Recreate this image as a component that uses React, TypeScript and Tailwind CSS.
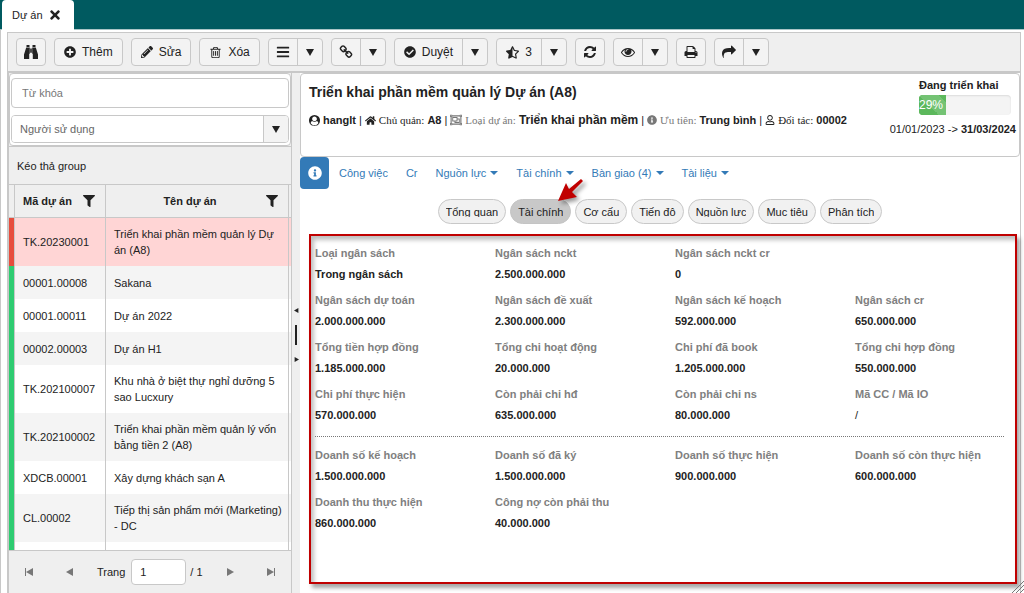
import type { ReactNode } from "react";
import {
  FaBars,
  FaCheckCircle,
  FaFilter,
  FaHome,
  FaInfoCircle,
  FaPencilAlt,
  FaPlusCircle,
  FaRegObjectGroup,
  FaRegUser,
  FaStarHalfAlt,
  FaTimes,
} from "react-icons/fa";

const paths = {
  refresh:
    "M1639 1056q0 5-1 7-64 268-268 434.5t-478 166.5q-146 0-282.5-55t-243.5-157l-129 129q-19 19-45 19t-45-19-19-45v-448q0-26 19-45t45-19h448q26 0 45 19t19 45-19 45l-137 137q71 66 161 102t187 36q134 0 250-65t186-179q11-17 53-117 8-23 30-23h192q13 0 22.5 9.5t9.5 22.5zm25-800v448q0 26-19 45t-45 19h-448q-26 0-45-19t-19-45 19-45l138-138q-148-137-349-137-134 0-250 65t-186 179q-11 17-53 117-8 23-30 23h-199q-13 0-22.5-9.5t-9.5-22.5v-7q65-268 270-434.5t480-166.5q146 0 284 55.5t245 156.5l130-129q19-19 45-19t45 19 19 45z",
  print:
    "M448 1536h896v-256h-896v256zm0-640h896v-384h-160q-40 0-68-28t-28-68v-160h-640v640zm1152 64q0-26-19-45t-45-19-45 19-19 45 19 45 45 19 45-19 19-45zm128 0v416q0 13-9.5 22.5t-22.5 9.5h-224v160q0 40-28 68t-68 28h-960q-40 0-68-28t-28-68v-160h-224q-13 0-22.5-9.5t-9.5-22.5v-416q0-79 56.5-135.5t135.5-56.5h64v-544q0-40 28-68t68-28h672q40 0 88 20t76 48l152 152q28 28 48 76t20 88v256h64q79 0 135.5 56.5t56.5 135.5z",
  share:
    "M1792 640q0 26-19 45l-512 512q-19 19-45 19t-45-19-19-45v-256h-224q-98 0-175.5 6t-154 21.5-133 42.5-105.5 69.5-80 101-48.5 138.5-17.5 181q0 55 5 123 0 6 2.5 23.5t2.5 26.5q0 15-8.5 25t-23.5 10q-16 0-28-17-7-9-13-22t-13.5-30-10.5-24q-127-285-127-451 0-199 53-333 162-403 875-403h224v-256q0-26 19-45t45-19 45 19l512 512q19 19 19 45z",
  link: "M1520 1216q0-40-28-68l-208-208q-28-28-68-28-42 0-72 32 3 3 19 18.5t21.5 21.5 15 19 13 25.5 3.5 27.5q0 40-28 68t-68 28q-15 0-27.5-3.5t-25.5-13-19-15-21.5-21.5-18.5-19q-33 31-33 73 0 40 28 68l206 207q27 27 68 27 40 0 68-26l147-146q28-28 28-67zm-703-705q0-40-28-68l-206-207q-28-28-68-28-39 0-68 27l-147 146q-28 28-28 67 0 40 28 68l208 208q27 27 68 27 42 0 72-31-3-3-19-18.5t-21.5-21.5-15-19-13-25.5-3.5-27.5q0-40 28-68t68-28q15 0 27.5 3.5t25.5 13 19 15 21.5 21.5 18.5 19q33-31 33-73zm895 705q0 120-85 203l-147 146q-83 83-203 83-121 0-204-85l-206-207q-83-83-83-203 0-123 88-209l-88-88q-86 88-208 88-120 0-204-84l-208-208q-84-84-84-204t85-203l147-146q83-83 203-83 121 0 204 85l206 207q83 83 83 203 0 123-88 209l88 88q86-88 208-88 120 0 204 84l208 208q84 84 84 204z",
  trash:
    "M704 736v576q0 14-9 23t-23 9h-64q-14 0-23-9t-9-23v-576q0-14 9-23t23-9h64q14 0 23 9t9 23zm256 0v576q0 14-9 23t-23 9h-64q-14 0-23-9t-9-23v-576q0-14 9-23t23-9h64q14 0 23 9t9 23zm256 0v576q0 14-9 23t-23 9h-64q-14 0-23-9t-9-23v-576q0-14 9-23t23-9h64q14 0 23 9t9 23zm128 724v-948h-896v948q0 22 7 40.5t14.5 27 10.5 8.5h832q3 0 10.5-8.5t14.5-27 7-40.5zm-672-1076h448l-48-117q-7-9-17-11h-317q-10 2-17 11zm928 32v64q0 14-9 23t-23 9h-96v948q0 83-47 143.5t-113 60.5h-832q-66 0-113-58.5t-47-141.5v-952h-96q-14 0-23-9t-9-23v-64q0-14 9-23t23-9h309l70-167q15-37 54-63t79-26h320q40 0 79 26t54 63l70 167h309q14 0 23 9t9 23z",
  eye: "M1664 960q-152-236-381-353 61 104 61 225 0 185-131.5 316.5t-316.5 131.5-316.5-131.5-131.5-316.5q0-121 61-225-229 117-381 353 133 205 333.5 326.5t434.5 121.5 434.5-121.5 333.5-326.5zm-720-384q0-20-14-34t-34-14q-125 0-214.5 89.5t-89.5 214.5q0 20 14 34t34 14 34-14 14-34q0-86 61-147t147-61q20 0 34-14t14-34zm848 384q0 34-20 69-140 230-376.5 368.5t-499.5 138.5-499.5-139-376.5-368q-20-35-20-69t20-69q140-229 376.5-368t499.5-139 499.5 139 376.5 368q20 35 20 69z",
  user: "M1523 1339q-22-155-87.5-257.5t-184.5-118.5q-67 74-159.5 115.5t-195.5 41.5-195.5-41.5-159.5-115.5q-119 16-184.5 118.5t-87.5 257.5q106 150 271 237.5t356 87.5 356-87.5 271-237.5zm-243-699q0-159-112.5-271.5t-271.5-112.5-271.5 112.5-112.5 271.5 112.5 271.5 271.5 112.5 271.5-112.5 112.5-271.5zm512 256q0 182-71 347.5t-190.5 286-285.5 191.5-349 71q-182 0-348-71t-286-191-191-286-71-348 71-348 191-286 286-191 348-71 348 71 286 191 191 286 71 348z",
};

function Icon({ name, className = "size-3.5" }: { name: keyof typeof paths; className?: string }) {
  return (
    <svg viewBox="0 0 1792 1792" className={className} fill="currentColor" aria-hidden="true">
      <path d={paths[name]} />
    </svg>
  );
}

function Binoculars() {
  return (
    <svg viewBox="0 0 16 16" className="size-4" fill="currentColor" aria-hidden="true">
      <path d="M3.5 1h3v2h-3zM9.5 1h3v2h-3zM3.2 3.6h3.6V9.500l-.6.6V15H1v-4.500zM12.800 3.600H9.200v5.900l.6.6V15H15v-4.500zM7.200 4.500h1.600v4.300H7.200z" />
    </svg>
  );
}

function Triangle({ className }: { className: string }) {
  return (
    <svg viewBox="0 0 8 8" className={className} fill="currentColor" aria-hidden="true">
      <path d="M0 1h8L4 8z" />
    </svg>
  );
}

type Tool = { title: string; icon: ReactNode; text?: string; menu?: boolean };

const tools: Tool[] = [
  { title: "Tìm kiếm", icon: <Binoculars /> },
  { title: "Thêm", icon: <FaPlusCircle className="size-3" />, text: "Thêm" },
  { title: "Sửa", icon: <FaPencilAlt className="size-3" />, text: "Sửa" },
  { title: "Xóa", icon: <Icon name="trash" className="size-[13px]" />, text: "Xóa" },
  { title: "Danh sách", icon: <FaBars className="size-3.5" />, menu: true },
  { title: "Liên kết", icon: <Icon name="link" />, menu: true },
  { title: "Duyệt", icon: <FaCheckCircle className="size-3" />, text: "Duyệt", menu: true },
  { title: "Đánh giá", icon: <FaStarHalfAlt className="size-[13px]" />, text: "3", menu: true },
  { title: "Làm mới", icon: <Icon name="refresh" /> },
  { title: "Xem", icon: <Icon name="eye" />, menu: true },
  { title: "In", icon: <Icon name="print" /> },
  { title: "Chia sẻ", icon: <Icon name="share" />, menu: true },
];

const projects = [
  { code: "TK.20230001", name: "Triển khai phần mềm quản lý Dự án (A8)", active: true },
  { code: "00001.00008", name: "Sakana" },
  { code: "00001.00011", name: "Dự án 2022" },
  { code: "00002.00003", name: "Dự án H1" },
  { code: "TK.202100007", name: "Khu nhà ở biệt thự nghỉ dưỡng 5 sao Lucxury" },
  { code: "TK.202100002", name: "Triển khai phần mềm quản lý vốn bằng tiền 2 (A8)" },
  { code: "XDCB.00001", name: "Xây dựng khách sạn A" },
  { code: "CL.00002", name: "Tiếp thị sản phẩm mới (Marketing) - DC" },
  { code: "", name: "" },
];

const tabs = [
  { text: "Công việc" },
  { text: "Cr" },
  { text: "Nguồn lực", menu: true },
  { text: "Tài chính", menu: true },
  { text: "Bàn giao (4)", menu: true },
  { text: "Tài liệu", menu: true },
];

const pills = ["Tổng quan", "Tài chính", "Cơ cấu", "Tiến độ", "Nguồn lực", "Mục tiêu", "Phân tích"];

const budget = [
  [
    ["Loại ngân sách", "Trong ngân sách"],
    ["Ngân sách nckt", "2.500.000.000"],
    ["Ngân sách nckt cr", "0"],
  ],
  [
    ["Ngân sách dự toán", "2.000.000.000"],
    ["Ngân sách đề xuất", "2.300.000.000"],
    ["Ngân sách kế hoạch", "592.000.000"],
    ["Ngân sách cr", "650.000.000"],
  ],
  [
    ["Tổng tiền hợp đồng", "1.185.000.000"],
    ["Tổng chi hoạt động", "20.000.000"],
    ["Chi phí đã book", "1.205.000.000"],
    ["Tổng chi hợp đồng", "550.000.000"],
  ],
  [
    ["Chi phí thực hiện", "570.000.000"],
    ["Còn phải chi hđ", "635.000.000"],
    ["Còn phải chi ns", "80.000.000"],
    ["Mã CC / Mã IO", "/"],
  ],
];

const revenue = [
  [
    ["Doanh số kế hoạch", "1.500.000.000"],
    ["Doanh số đã ký", "1.500.000.000"],
    ["Doanh số thực hiện", "900.000.000"],
    ["Doanh số còn thực hiện", "600.000.000"],
  ],
  [
    ["Doanh thu thực hiện", "860.000.000"],
    ["Công nợ còn phải thu", "40.000.000"],
  ],
];

function Toolbar() {
  return (
    <div className="flex h-10 shrink-0 items-center gap-2 border-b-2 border-[#c8c8c8] bg-[#efefef] px-2">
      {tools.map((t) => (
        <div key={t.title} className="flex h-7 rounded border border-[#c8c8c8] bg-[#f3f3f3]">
          <button
            title={t.title}
            className={t.text ? "flex items-center gap-1.5 px-[9px] text-[12px]" : "flex w-7 items-center justify-center"}
          >
            {t.icon}
            {t.text}
          </button>
          {t.menu && (
            <button title={t.title + " - thêm"} className="flex w-[25px] items-center justify-center border-l border-[#c8c8c8]">
              <Triangle className="size-2" />
            </button>
          )}
        </div>
      ))}
    </div>
  );
}

function Sidebar() {
  return (
    <aside className="flex w-[284px] shrink-0 flex-col border-x border-[#c8c8c8] bg-[#efefef]">
      <div className="flex flex-col gap-[7px] rounded border border-[#c8c8c8] bg-white px-px pt-1 pb-0.5">
        <input
          aria-label="Từ khóa"
          placeholder="Từ khóa"
          className="h-[30px] rounded border border-[#c8c8c8] px-2.5 placeholder:text-[#777]"
        />
        <div className="relative flex h-7 overflow-hidden rounded border border-[#c8c8c8]">
          <select aria-label="Người sử dụng" className="min-w-0 flex-1 appearance-none bg-[linear-gradient(to_left,#f3f3f3_24px,#c8c8c8_24px,#c8c8c8_25px,#fff_25px)] px-2 text-[#666]">
            <option>Người sử dụng</option>
          </select>
          <Triangle className="pointer-events-none absolute right-2 top-[9px] size-2" />
        </div>
      </div>

      <div className="flex h-[38px] shrink-0 items-center border-t border-[#c8c8c8] px-2">Kéo thả group</div>

      <div className="min-h-0 flex-1 overflow-hidden">
        <table className="w-full table-fixed border-separate border-spacing-0">
          <colgroup>
            <col className="w-[6px]" />
            <col className="w-[91px]" />
            <col />
            <col className="w-[2px]" />
          </colgroup>
          <thead>
            <tr className="h-[34px]">
              <th className="border-y border-r border-[#c8c8c8]"></th>
              <th className="border-y border-r border-[#c8c8c8] pr-2.5 pl-2">
                <div className="flex items-center justify-between">
                  Mã dự án
                  <button title="Lọc mã dự án">
                    <FaFilter className="size-3" />
                  </button>
                </div>
              </th>
              <th className="border-y border-r border-[#c8c8c8] px-2">
                <div className="flex items-center justify-between pr-0.5">
                  <span className="flex-1">Tên dự án</span>
                  <button title="Lọc tên dự án">
                    <FaFilter className="size-3" />
                  </button>
                </div>
              </th>
              <th className="border-y border-[#c8c8c8]"></th>
            </tr>
          </thead>
          <tbody>
            {projects.map((p) => (
              <tr
                key={p.code}
                className={p.active ? "h-[33px] bg-[#ffd5d5]" : "h-[33px] bg-white even:bg-[#f4f4f4]"}
              >
                <td className={p.active ? "border-r border-[#c8c8c8] bg-[#e74c3c]" : "border-r border-[#c8c8c8] bg-[#2ecc71]"}></td>
                <td className="border-r border-[#c8c8c8] pl-2">{p.code}</td>
                <td className="border-r border-[#c8c8c8] py-2 pr-1 pl-2">{p.name}</td>
                <td></td>
              </tr>
            ))}
          </tbody>
        </table>
      </div>

      <div className="flex h-[43px] shrink-0 items-center border-t border-[#c8c8c8] px-4">
        <button title="Trang đầu" className="flex items-center text-[#777]">
          <span className="h-2 w-px bg-current"></span>
          <Triangle className="size-2 rotate-90" />
        </button>
        <button title="Trang trước" className="ml-8 text-[#777]">
          <Triangle className="size-2 rotate-90" />
        </button>
        <label className="ml-[23px] flex items-center gap-1.5">
          Trang
          <input defaultValue="1" className="h-[26px] w-[55px] rounded border border-[#c8c8c8] bg-white px-2" />
        </label>
        <span className="ml-1">/ 1</span>
        <button title="Trang sau" className="ml-[23px] text-[#777]">
          <Triangle className="size-2 -rotate-90" />
        </button>
        <button title="Trang cuối" className="ml-8 flex items-center text-[#777]">
          <Triangle className="size-2 -rotate-90" />
          <span className="h-2 w-px bg-current"></span>
        </button>
      </div>
    </aside>
  );
}

function Splitter() {
  return (
    <div className="flex w-2 shrink-0 flex-col items-center justify-center gap-3 bg-[#efefef] pt-1">
      <Triangle className="size-[5px] rotate-90" />
      <span className="h-5 w-0.5 bg-[#222]"></span>
      <Triangle className="size-[5px] -rotate-90" />
    </div>
  );
}

function Summary() {
  return (
    <header className="flex h-[84px] shrink-0 justify-between rounded border border-[#c8c8c8]">
      <div className="flex flex-col pl-2 pt-2">
        <h1 className="text-[14px] leading-5 font-bold">Triển khai phần mềm quản lý Dự án (A8)</h1>
        <p className="mt-2.5 flex items-center gap-[3px] whitespace-nowrap">
          <Icon name="user" className="size-[11px]" />
          <b>hanglt</b> |
          <FaHome className="size-[11px]" />
          <span className="font-['Liberation_Serif',serif]">Chủ quản:</span>
          <b>A8</b> |
          <FaRegObjectGroup className="size-3 text-[#777]" />
          <span className="font-['Liberation_Serif',serif] text-[#777]">Loại dự án:</span>
          <b className="text-[12px]">Triển khai phần mềm</b> |
          <FaInfoCircle className="size-2.5 text-[#777]" />
          <span className="font-['Liberation_Serif',serif] text-[#777]">Ưu tiên:</span>
          <b>Trung bình</b> |
          <FaRegUser className="size-2.5" />
          <span className="font-['Liberation_Serif',serif]">Đối tác:</span>
          <b>00002</b>
        </p>
      </div>
      <div className="flex flex-col items-end pr-[3px] pt-[3px]">
        <div className="mr-[5px] w-[92px]">
          <b>Đang triển khai</b>
          <div className="mt-0.5 h-5 overflow-hidden rounded bg-[#f4f4f4] shadow-[inset_0_1px_2px_rgba(0,0,0,0.1)]">
            <div className="h-full w-[29%] bg-[#5cb85c] bg-[linear-gradient(45deg,#74c374_25%,#5cb85c_25%,#5cb85c_50%,#74c374_50%,#74c374_75%,#5cb85c_75%)] bg-size-[40px_40px] text-[12px] leading-5 text-white">
              29%
            </div>
          </div>
        </div>
        <p className="mt-1.5">
          01/01/2023 -&gt; <b>31/03/2024</b>
        </p>
      </div>
    </header>
  );
}

function Fields({ rows }: { rows: string[][][] }) {
  return (
    <div className="flex flex-col gap-[5px]">
      {rows.map((row) => (
        <dl key={row[0][0]} className="grid grid-cols-[repeat(4,180px)]">
          {row.map(([label, value]) => (
            <div key={label}>
              <dt className="leading-5 font-bold text-[#808080]">{label}</dt>
              <dd className={value === "/" ? "leading-[22px]" : "leading-[22px] font-bold"}>{value}</dd>
            </div>
          ))}
        </dl>
      ))}
    </div>
  );
}

function Detail() {
  return (
    <main className="relative flex min-w-0 flex-1 flex-col bg-white">
      <Summary />
      <nav className="flex h-8 shrink-0 items-center text-[#337ab7]">
        <button title="Thông tin" className="mr-px flex h-8 w-[29px] items-center justify-center rounded bg-[#337ab7] text-white">
          <FaInfoCircle className="size-3.5" />
        </button>
        {tabs.map((t) => (
          <a key={t.text} href="#" className="flex items-center gap-1 px-[9px]">
            {t.text}
            {t.menu && (
              <svg viewBox="0 0 8 4" className="h-1 w-2" fill="currentColor" aria-hidden="true">
                <path d="M0 0h8L4 4z" />
              </svg>
            )}
          </a>
        ))}
      </nav>

      <div className="mt-2.5 flex justify-center gap-1">
        {pills.map((p) => (
          <button
            key={p}
            className={
              p === "Tài chính"
                ? "flex h-[25px] items-center rounded-full border border-[#c4c4c4] bg-[#c8c8c8] px-[7px]"
                : "flex h-[25px] items-center rounded-full border border-[#c8c8c8] bg-[#f1f1f1] px-[7px]"
            }
          >
            <span className="h-2.5 overflow-hidden leading-[10px]">{p}</span>
          </button>
        ))}
      </div>

      <section className="mt-2.5 mr-[3px] mb-[9px] ml-[9px] min-h-0 flex-1 overflow-hidden border-2 border-[#c00000] pt-[7px] pl-1 shadow-[3px_4px_4px_rgba(0,0,0,0.35),inset_3px_4px_4px_rgba(0,0,0,0.25)]">
        <Fields rows={budget} />
        <div className="mt-2.5 mr-[11px] mb-2 border-t border-dotted border-[#777]"></div>
        <Fields rows={revenue} />
      </section>

      <svg
        viewBox="0 0 30 30"
        className="absolute top-[103px] left-[256px] size-[30px] drop-shadow-[3px_3px_2px_rgba(0,0,0,0.4)]"
        aria-hidden="true"
      >
        <path d="M25 3l2 2L16 16l5 5L2 25l8-18 3 6z" fill="#c00000" />
      </svg>
    </main>
  );
}

export default function App() {
  return (
    <div className="flex h-screen flex-col overflow-hidden bg-white font-['Liberation_Sans',Arial,sans-serif] text-[11px] leading-4 text-[#222]">
      <div className="flex h-[30px] shrink-0 border-b border-[#a9c5c7] bg-[#005a60] pl-0.5">
        <div className="-mb-px flex h-[30px] w-[72px] items-center justify-between rounded-t bg-white pr-3 pl-2.5">
          Dự án
          <button title="Đóng">
            <FaTimes className="size-3.5" />
          </button>
        </div>
      </div>
      <div className="relative flex min-h-0 flex-1 border-l border-[#c8c8c8] pt-0.5 pr-[3px] pl-1.5">
        <div className="flex min-w-0 flex-1 flex-col border-t border-r border-l border-[#c8c8c8]">
          <Toolbar />
          <div className="flex min-h-0 flex-1">
            <Sidebar />
            <Splitter />
            <Detail />
          </div>
        </div>
        <svg viewBox="0 0 12 12" className="absolute right-0 bottom-0 size-3" stroke="#777" aria-hidden="true">
          <path d="M0 12L12 0M4 12l8-8M8 12l4-4" />
        </svg>
      </div>
    </div>
  );
}
